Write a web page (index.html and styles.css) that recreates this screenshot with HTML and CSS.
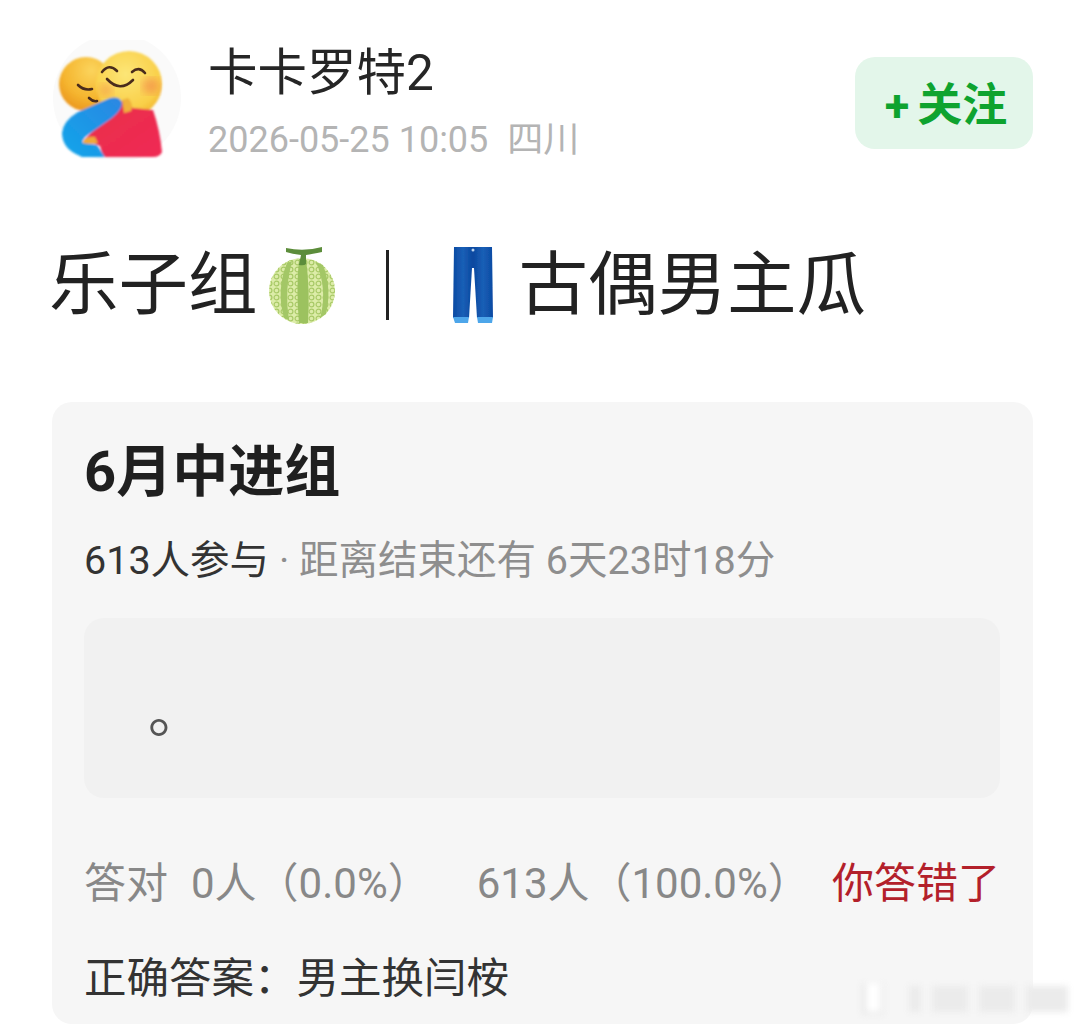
FILE: index.html
```html
<!DOCTYPE html>
<html>
	<head>
		<meta charset="utf-8">
		<link rel="stylesheet" href="styles.css">
	</head>
	<body>
		<div class="header">
			<svg class="avatar" viewBox="52 40 130 120">
				<defs>
					<radialGradient id="backFace" cx="0.6" cy="0.25" r="0.85">
						<stop offset="0" stop-color="#fbd45c"></stop>
						<stop offset="0.6" stop-color="#f5b52f"></stop>
						<stop offset="1" stop-color="#e98f1a"></stop>
					</radialGradient>
					<radialGradient id="frontFace" cx="0.45" cy="0.35" r="0.75">
						<stop offset="0" stop-color="#fde677"></stop>
						<stop offset="0.7" stop-color="#f9cf48"></stop>
						<stop offset="1" stop-color="#efab25"></stop>
					</radialGradient>
					<linearGradient id="armGrad" x1="0" y1="1" x2="1" y2="0">
						<stop offset="0" stop-color="#10a6ea"></stop>
						<stop offset="1" stop-color="#2c86e2"></stop>
					</linearGradient>
					<linearGradient id="bodyGrad" x1="0" y1="0" x2="1" y2="1">
						<stop offset="0" stop-color="#e8304a"></stop>
						<stop offset="1" stop-color="#f02a54"></stop>
					</linearGradient>
					<filter id="soft"><feGaussianBlur stdDeviation="1"></feGaussianBlur></filter>
					<filter id="softBlush"><feGaussianBlur stdDeviation="4"></feGaussianBlur></filter>
				</defs>
				<circle cx="117" cy="98" r="64" fill="#fafafa"></circle>
				<g filter="url(#soft)">
					<circle cx="86" cy="84" r="27" fill="url(#backFace)"></circle>
					<circle cx="129" cy="84" r="33" fill="url(#frontFace)"></circle>
					<path d="M84 140 L123 100 L133 108 L153 110 Q160 130 162 152 Q160 157 153 157 L103 157 L100 146 Z" fill="url(#bodyGrad)"></path>
					<path d="M128 98 Q134 104 131 111 L124 113 L122 100 Z" fill="#f0b13a"></path>
					<path d="M62 133 Q63 121 78 112 L110 98 Q120 96 122 103 Q122 110 112 118 L85 137 L82 142 L97 145 L105 157 L82 157 Q70 152 66 146 Q62 140 62 133 Z" fill="url(#armGrad)"></path>
					<path d="M83 141 Q88 136 95 137 L98 143 Q90 145 83 143 Z" fill="#f0a93a"></path>
				</g>
				<ellipse cx="151" cy="86" rx="9" ry="8" fill="#f2804a" opacity="0.6" filter="url(#softBlush)"></ellipse>
				<ellipse cx="106" cy="90" rx="7" ry="6" fill="#f2804a" opacity="0.45" filter="url(#softBlush)"></ellipse>
				<g fill="none" stroke="#4a2c1c" stroke-width="2.6" stroke-linecap="round">
					<path d="M102 72 Q109 63 117 71"></path>
					<path d="M132 72 Q139 66 145 73"></path>
					<path d="M107 79 Q120 93 133 80"></path>
					<path d="M78 85 Q84 91 92 89"></path>
					<path d="M89 98 Q93 102 97 101"></path>
				</g>
			</svg>
			<div class="userInfo">
				<div class="userName">卡卡罗特2</div>
				<div class="postMeta">2026-05-25 10:05<span class="postPlace">四川</span></div>
			</div>
			<div class="followButton"><span class="followPlus">+</span>关注</div>
		</div>

		<div class="titleRow">
			<span class="titleStart">乐子组</span>
			<svg class="melon" viewBox="266 246 72 78">
				<defs>
					<pattern id="melonNet" width="7" height="7" patternUnits="userSpaceOnUse">
						<circle cx="3.5" cy="3.5" r="2.4" fill="none" stroke="#a8c966" stroke-width="1.2"></circle>
					</pattern>
					<filter id="softMelon"><feGaussianBlur stdDeviation="0.5"></feGaussianBlur></filter>
				</defs>
				<g filter="url(#softMelon)">
					<circle cx="302" cy="291" r="33" fill="#dcecA8"></circle>
					<circle cx="302" cy="291" r="33" fill="url(#melonNet)"></circle>
					<path d="M299 259 Q296 290 299 323 L308 323 Q310 290 306 259 Z" fill="#9cc25f"></path>
					<path d="M287 263 Q276 290 284 318 L289 320 Q284 290 292 261 Z" fill="#a3c766"></path>
					<path d="M316 262 Q328 290 320 318 L326 314 Q332 288 323 265 Z" fill="#a3c766"></path>
					<path d="M286 248 Q304 252 322 247 L322 252 Q312 254 306 255 L306 264 Q304 266 299 265 L301 255 Q292 254 286 252 Z" fill="#5c8d3a"></path>
				</g>
			</svg>
			<div class="titleDivider"></div>
			<svg class="jeans" viewBox="452 246 42 78">
				<defs>
					<linearGradient id="jeanGrad" x1="0" y1="0" x2="1" y2="0">
						<stop offset="0" stop-color="#0b4aa3"></stop>
						<stop offset="0.25" stop-color="#1a5fb6"></stop>
						<stop offset="0.5" stop-color="#0a479f"></stop>
						<stop offset="0.75" stop-color="#1a5fb6"></stop>
						<stop offset="1" stop-color="#0b4aa3"></stop>
					</linearGradient>
					<filter id="softJeans"><feGaussianBlur stdDeviation="0.5"></feGaussianBlur></filter>
				</defs>
				<g filter="url(#softJeans)">
					<path d="M454 247 L492 247 L493 318 L477 318 L474 268 L472 268 L469 318 L453 318 Z" fill="url(#jeanGrad)"></path>
					<path d="M453 317 L469 317 L468 323 L455 323 Z M477 317 L493 317 L492 323 L478 323 Z" fill="#4ea6ea"></path>
				</g>
				<circle cx="473" cy="250" r="1.5" fill="#b9d3ee"></circle>
			</svg>
			<span class="titleEnd">古偶男主瓜</span>
		</div>

		<div class="quizCard">
			<div class="quizTitle">6月中进组</div>
			<div class="quizMeta">613人参与<span class="quizLeft"> · 距离结束还有 6天23时18分</span></div>
			<div class="answerBox"><span class="answerText">。</span></div>
			<div class="statRow">
				<span>答对</span>
				<span class="statCount">0人（0.0%）</span>
				<span class="statCount statWrong">613人（100.0%）</span>
				<span class="statResult">你答错了</span>
			</div>
			<div class="correctRow">正确答案：男主换闫桉</div>
		</div>

		<div class="watermark">
			<div class="markIcon"></div>
			<div class="markBar markBarShort"></div>
			<div class="markBar"></div>
			<div class="markBar"></div>
			<div class="markBar markBarWide"></div>
		</div>
	</body>
</html>
```
FILE: styles.css
```css
html {
	background-color: white;
}

body {
	position: relative;
	height: 1027px;
	margin: 0;
	padding: 0 47px 0 52px;
	box-sizing: border-box;
	overflow: hidden;
	background-color: white;
	color: #222222;
	font-family: Roboto, "Noto Sans CJK SC", sans-serif;
}

.header {
	display: flex;
	align-items: flex-start;
	height: 190px;
	padding-top: 40px;
	box-sizing: border-box;
}

.avatar {
	width: 130px;
	height: 120px;
	flex: none;
}

.userInfo {
	flex: 1;
	margin-left: 26px;
}

.userName {
	font-size: 49.5px;
	line-height: 66px;
	color: #262626;
}

.postMeta {
	font-size: 36px;
	line-height: 40px;
	margin-top: 14px;
	color: #b4b4b4;
}

.postPlace {
	margin-left: 19px;
}

.followButton {
	width: 178px;
	height: 92px;
	margin-top: 17px;
	padding-left: 4px;
	box-sizing: border-box;
	border-radius: 20px;
	background-color: #e3f6ea;
	color: #0ea32f;
	font-size: 45px;
	font-weight: 700;
	line-height: 98px;
	text-align: center;
}

.followPlus {
	margin-right: 8px;
}

.titleRow {
	display: flex;
	align-items: center;
	height: 100px;
	margin-top: 45px;
	font-size: 69.5px;
	color: #222222;
}

.titleRow span {
	padding-bottom: 14px;
}

.titleStart {
	margin-left: -3px;
}

.melon {
	width: 72px;
	height: 78px;
	margin-left: 8px;
	flex: none;
}

.titleDivider {
	width: 3px;
	height: 70px;
	margin-left: 48px;
	background-color: #222222;
}

.jeans {
	width: 42px;
	height: 78px;
	margin-left: 63px;
	flex: none;
}

.titleEnd {
	margin-left: 25px;
}

.quizCard {
	margin-top: 67px;
	height: 622px;
	padding: 0 33px 0 32px;
	border-radius: 20px;
	background-color: #f6f6f6;
}

.quizTitle {
	padding-top: 36px;
	font-size: 56px;
	line-height: 68px;
	font-weight: 700;
	color: #1f1f1f;
}

.quizMeta {
	margin-top: 30px;
	font-size: 39.5px;
	line-height: 50px;
	color: #333333;
}

.quizLeft {
	color: #8e8e8e;
}

.answerBox {
	height: 180px;
	margin-top: 32px;
	border-radius: 20px;
	background-color: #f1f1f1;
	line-height: 190px;
}

.answerText {
	margin-left: 64px;
	font-size: 56px;
	color: #555555;
}

.statRow {
	display: flex;
	align-items: center;
	margin-top: 56px;
	font-size: 42px;
	line-height: 60px;
	color: #888888;
}

.statCount {
	margin-left: 23px;
}

.statWrong {
	margin-left: 47px;
}

.statResult {
	margin-left: auto;
	color: #b3202a;
}

.correctRow {
	margin-top: 35px;
	font-size: 42.5px;
	line-height: 60px;
	color: #333333;
}

.watermark {
	position: absolute;
	left: 862px;
	top: 984px;
	display: flex;
	align-items: center;
	gap: 11px;
	filter: blur(3px);
}

.markIcon {
	width: 14px;
	height: 28px;
	margin-right: 14px;
	border-left: 4px solid #e6e6e6;
	border-right: 4px solid #eeeeee;
	border-bottom: 2px solid #e2e2e2;
	background-color: #ffffff;
}

.markBar {
	width: 36px;
	height: 26px;
	background-color: #ebebeb;
}

.markBarShort {
	width: 12px;
}

.markBarWide {
	width: 42px;
}
```
